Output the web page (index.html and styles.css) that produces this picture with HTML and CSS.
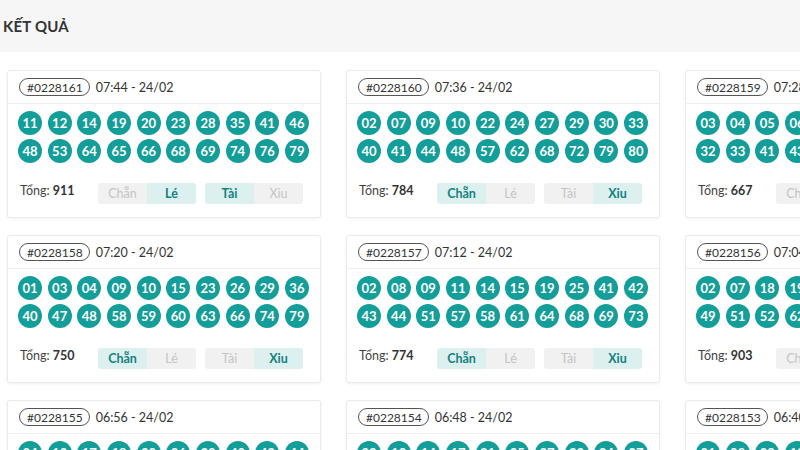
FILE: index.html
```html
<!DOCTYPE html>
<html lang="vi">
<head>
<meta charset="utf-8">
<title>Kết quả</title>
<link rel="stylesheet" href="styles.css">
</head>
<body>
<header class="topbar"><h1 class="title">KẾT QUẢ</h1></header>
<main class="grid">

<section class="card">
  <div class="card-head"><span class="badge">#0228161</span><span class="time">07:44 - 24/02</span></div>
  <div class="balls">
    <span class="ball">11</span><span class="ball">12</span><span class="ball">14</span><span class="ball">19</span><span class="ball">20</span><span class="ball">23</span><span class="ball">28</span><span class="ball">35</span><span class="ball">41</span><span class="ball">46</span>
    <span class="ball">48</span><span class="ball">53</span><span class="ball">64</span><span class="ball">65</span><span class="ball">66</span><span class="ball">68</span><span class="ball">69</span><span class="ball">74</span><span class="ball">76</span><span class="ball">79</span>
  </div>
  <div class="card-foot">
    <span class="sum">Tổng: <b>911</b></span>
    <div class="seg"><span class="opt">Chẵn</span><span class="opt on">Lé</span></div>
    <div class="seg"><span class="opt on">Tài</span><span class="opt">Xiu</span></div>
  </div>
</section>

<section class="card">
  <div class="card-head"><span class="badge">#0228160</span><span class="time">07:36 - 24/02</span></div>
  <div class="balls">
    <span class="ball">02</span><span class="ball">07</span><span class="ball">09</span><span class="ball">10</span><span class="ball">22</span><span class="ball">24</span><span class="ball">27</span><span class="ball">29</span><span class="ball">30</span><span class="ball">33</span>
    <span class="ball">40</span><span class="ball">41</span><span class="ball">44</span><span class="ball">48</span><span class="ball">57</span><span class="ball">62</span><span class="ball">68</span><span class="ball">72</span><span class="ball">79</span><span class="ball">80</span>
  </div>
  <div class="card-foot">
    <span class="sum">Tổng: <b>784</b></span>
    <div class="seg"><span class="opt on">Chẵn</span><span class="opt">Lé</span></div>
    <div class="seg"><span class="opt">Tài</span><span class="opt on">Xiu</span></div>
  </div>
</section>

<section class="card">
  <div class="card-head"><span class="badge">#0228159</span><span class="time">07:28 - 24/02</span></div>
  <div class="balls">
    <span class="ball">03</span><span class="ball">04</span><span class="ball">05</span><span class="ball">06</span><span class="ball">12</span><span class="ball">18</span><span class="ball">21</span><span class="ball">25</span><span class="ball">27</span><span class="ball">30</span>
    <span class="ball">32</span><span class="ball">33</span><span class="ball">41</span><span class="ball">43</span><span class="ball">52</span><span class="ball">58</span><span class="ball">61</span><span class="ball">66</span><span class="ball">70</span><span class="ball">75</span>
  </div>
  <div class="card-foot">
    <span class="sum">Tổng: <b>667</b></span>
    <div class="seg"><span class="opt">Chẵn</span><span class="opt on">Lé</span></div>
    <div class="seg"><span class="opt">Tài</span><span class="opt on">Xiu</span></div>
  </div>
</section>

<section class="card">
  <div class="card-head"><span class="badge">#0228158</span><span class="time">07:20 - 24/02</span></div>
  <div class="balls">
    <span class="ball">01</span><span class="ball">03</span><span class="ball">04</span><span class="ball">09</span><span class="ball">10</span><span class="ball">15</span><span class="ball">23</span><span class="ball">26</span><span class="ball">29</span><span class="ball">36</span>
    <span class="ball">40</span><span class="ball">47</span><span class="ball">48</span><span class="ball">58</span><span class="ball">59</span><span class="ball">60</span><span class="ball">63</span><span class="ball">66</span><span class="ball">74</span><span class="ball">79</span>
  </div>
  <div class="card-foot">
    <span class="sum">Tổng: <b>750</b></span>
    <div class="seg"><span class="opt on">Chẵn</span><span class="opt">Lé</span></div>
    <div class="seg"><span class="opt">Tài</span><span class="opt on">Xiu</span></div>
  </div>
</section>

<section class="card">
  <div class="card-head"><span class="badge">#0228157</span><span class="time">07:12 - 24/02</span></div>
  <div class="balls">
    <span class="ball">02</span><span class="ball">08</span><span class="ball">09</span><span class="ball">11</span><span class="ball">14</span><span class="ball">15</span><span class="ball">19</span><span class="ball">25</span><span class="ball">41</span><span class="ball">42</span>
    <span class="ball">43</span><span class="ball">44</span><span class="ball">51</span><span class="ball">57</span><span class="ball">58</span><span class="ball">61</span><span class="ball">64</span><span class="ball">68</span><span class="ball">69</span><span class="ball">73</span>
  </div>
  <div class="card-foot">
    <span class="sum">Tổng: <b>774</b></span>
    <div class="seg"><span class="opt on">Chẵn</span><span class="opt">Lé</span></div>
    <div class="seg"><span class="opt">Tài</span><span class="opt on">Xiu</span></div>
  </div>
</section>

<section class="card">
  <div class="card-head"><span class="badge">#0228156</span><span class="time">07:04 - 24/02</span></div>
  <div class="balls">
    <span class="ball">02</span><span class="ball">07</span><span class="ball">18</span><span class="ball">19</span><span class="ball">23</span><span class="ball">27</span><span class="ball">31</span><span class="ball">36</span><span class="ball">40</span><span class="ball">44</span>
    <span class="ball">49</span><span class="ball">51</span><span class="ball">52</span><span class="ball">62</span><span class="ball">65</span><span class="ball">67</span><span class="ball">70</span><span class="ball">73</span><span class="ball">77</span><span class="ball">80</span>
  </div>
  <div class="card-foot">
    <span class="sum">Tổng: <b>903</b></span>
    <div class="seg"><span class="opt">Chẵn</span><span class="opt on">Lé</span></div>
    <div class="seg"><span class="opt on">Tài</span><span class="opt">Xiu</span></div>
  </div>
</section>

<section class="card">
  <div class="card-head"><span class="badge">#0228155</span><span class="time">06:56 - 24/02</span></div>
  <div class="balls">
    <span class="ball">04</span><span class="ball">10</span><span class="ball">17</span><span class="ball">18</span><span class="ball">20</span><span class="ball">26</span><span class="ball">30</span><span class="ball">40</span><span class="ball">43</span><span class="ball">44</span>
  </div>
</section>

<section class="card">
  <div class="card-head"><span class="badge">#0228154</span><span class="time">06:48 - 24/02</span></div>
  <div class="balls">
    <span class="ball">02</span><span class="ball">10</span><span class="ball">14</span><span class="ball">17</span><span class="ball">21</span><span class="ball">25</span><span class="ball">27</span><span class="ball">32</span><span class="ball">34</span><span class="ball">37</span>
  </div>
</section>

<section class="card">
  <div class="card-head"><span class="badge">#0228153</span><span class="time">06:40 - 24/02</span></div>
  <div class="balls">
    <span class="ball">01</span><span class="ball">08</span><span class="ball">09</span><span class="ball">13</span><span class="ball">16</span><span class="ball">22</span><span class="ball">28</span><span class="ball">35</span><span class="ball">39</span><span class="ball">45</span>
  </div>
</section>

</main>
</body>
</html>
```
FILE: styles.css
```css
* { box-sizing: border-box; }
html, body { margin: 0; padding: 0; }
body {
  width: 800px;
  height: 450px;
  overflow: hidden;
  background: #fff;
  font-family: Lato, "Noto Sans", "Liberation Sans", sans-serif;
  color: #333;
}
.topbar {
  height: 52px;
  background: #f6f6f6;
  display: flex;
  align-items: center;
  padding-left: 3px;
}
.title {
  margin: 0;
  font-size: 15px;
  font-weight: 700;
  color: #333;
  letter-spacing: 0.2px;
}
.grid {
  display: grid;
  grid-template-columns: repeat(3, 314px);
  column-gap: 25px;
  row-gap: 17px;
  padding: 18px 0 0 7px;
  width: 800px;
  overflow: hidden;
}
.card {
  width: 314px;
  height: 148px;
  border: 1px solid #ebebeb;
  border-radius: 3px;
  box-shadow: 0 1px 3px rgba(0,0,0,0.06);
  background: #fff;
  display: flex;
  flex-direction: column;
}
.card-head {
  height: 33px;
  border-bottom: 1px solid #efefef;
  display: flex;
  align-items: center;
  padding-left: 11px;
  font-size: 12.5px;
  color: #333;
}
.badge {
  border: 1px solid #555;
  border-radius: 10px;
  height: 18px;
  padding: 0 6px 0 7px;
  display: inline-flex;
  align-items: center;
  font-size: 12px;
}
.time { margin-left: 6px; }
.balls {
  display: grid;
  grid-template-columns: repeat(10, 24px);
  justify-content: space-between;
  row-gap: 4px;
  padding: 7px 11px 0 10px;
}
.ball {
  width: 24px;
  height: 24px;
  border-radius: 50%;
  background: #149e9a;
  color: #fff;
  font-size: 13px;
  font-weight: 700;
  display: flex;
  align-items: center;
  justify-content: center;
}
.card-foot {
  display: flex;
  align-items: center;
  margin-top: 20px;
  height: 21px;
  padding-left: 12px;
}
.sum {
  font-size: 12.5px;
  color: #444;
  width: 78px;
  margin-top: -6px;
}
.sum b { font-weight: 700; color: #333; }
.seg {
  display: flex;
  width: 98px;
  height: 21px;
  border-radius: 3px;
  overflow: hidden;
  margin-right: 9px;
}
.opt {
  flex: 1;
  display: flex;
  align-items: center;
  justify-content: center;
  background: #f1f1f1;
  color: #c4c4c4;
  font-size: 12.5px;
}
.opt.on {
  background: #ddf0f0;
  color: #13817e;
  font-weight: 700;
}
```
